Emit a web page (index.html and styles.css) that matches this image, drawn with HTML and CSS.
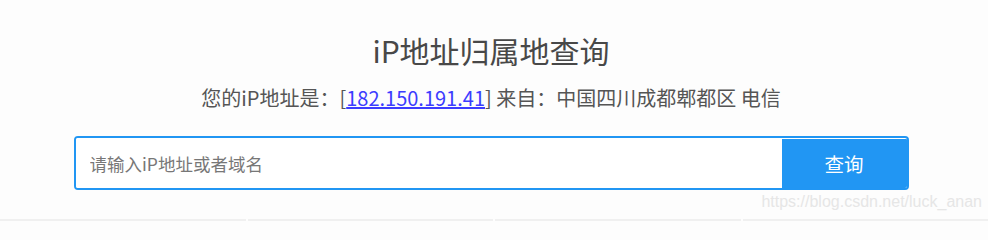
FILE: index.html
```html
<!DOCTYPE html>
<html lang="zh">
<head>
<meta charset="utf-8">
<title>iP地址归属地查询</title>
<link rel="stylesheet" href="styles.css">
</head>
<body>
<main class="page">
  <h1 class="title">iP地址归属地查询</h1>
  <p class="info">您的iP地址是：[<a class="ip" href="#">182.150.191.41</a>] 来自：中国四川成都郫都区 电信</p>
  <form class="search">
    <input class="search-input" type="text" placeholder="请输入iP地址或者域名">
    <button class="search-btn" type="button">查询</button>
  </form>
  <div class="watermark">https://blog.csdn.net/luck_anan</div>
</main>
<footer class="strip">
  <span class="cell"></span><span class="cell"></span><span class="cell"></span><span class="cell"></span>
</footer>
</body>
</html>
```
FILE: styles.css
```css
html, body {
  margin: 0;
  padding: 0;
  background: #fdfdfd;
  font-family: "Noto Sans CJK SC", "Noto Sans", sans-serif;
  color: #555;
  overflow: hidden;
}
.page {
  width: 982px;
  height: 219px;
  display: flex;
  flex-direction: column;
  align-items: center;
  box-sizing: border-box;
  padding-top: 30px;
}
.title {
  margin: 0;
  font-size: 30px;
  font-weight: 400;
  line-height: 40px;
  color: #484848;
}
.info {
  margin: 16px 0 0;
  font-size: 20px;
  line-height: 24px;
  color: #555;
}
.ip {
  color: #3c3cff;
  text-decoration: underline;
}
.search {
  margin: 26px 0 0;
  width: 835px;
  height: 54px;
  box-sizing: border-box;
  border: 2px solid #2196f3;
  border-radius: 4px;
  display: flex;
  background: #fff;
  overflow: hidden;
}
.search-input {
  flex: 1;
  border: none;
  outline: none;
  padding: 0 14px;
  font-family: inherit;
  font-size: 17.5px;
  color: #555;
  background: #fff;
}
.search-input::placeholder {
  color: #777;
}
.search-btn {
  width: 125px;
  border: none;
  margin-top: 1px;
  background: #2196f3;
  color: #fff;
  font-family: inherit;
  font-size: 19.5px;
  padding: 0;
}
.watermark {
  align-self: flex-end;
  margin: 2px 0 0;
  font-family: "Liberation Sans", Arial, sans-serif;
  font-size: 16px;
  line-height: 20px;
  color: #e6e6e6;
}
.strip {
  display: flex;
  gap: 2px;
  height: 2px;
}
.cell {
  flex: 1;
  background: #f0f0f0;
}
```
